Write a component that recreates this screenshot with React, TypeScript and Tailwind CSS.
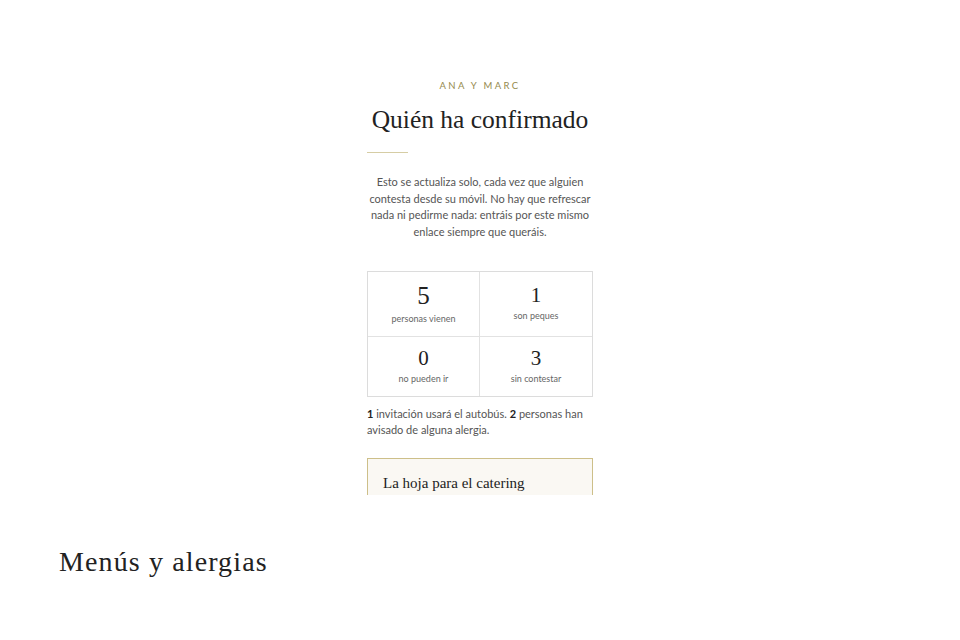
import React from 'react';

const serif = { fontFamily: '"Liberation Serif", "DejaVu Serif", serif' };

const stats = [
  { n: '5', label: 'personas vienen', big: true },
  { n: '1', label: 'son peques' },
  { n: '0', label: 'no pueden ir' },
  { n: '3', label: 'sin contestar' },
];

function StatCell({ n, label, big, i }: { n: string; label: string; big?: boolean; i: number }) {
  return (
    <div
      className={
        'flex flex-col items-center justify-center py-[10px] ' +
        (i % 2 === 0 ? 'border-r border-[#e2e2e2] ' : '') +
        (i < 2 ? 'border-b border-[#e2e2e2]' : '')
      }
    >
      <span
        className={big ? 'text-[25px] leading-[28px] text-[#222]' : 'text-[21px] leading-[23px] text-[#222]'}
        style={serif}
      >
        {n}
      </span>
      <span className="mt-[2px] text-[9px] leading-[14px] text-[#666]">{label}</span>
    </div>
  );
}

export default function App() {
  return (
    <div className="min-h-screen bg-white" style={{ fontFamily: 'Lato, "Noto Sans", sans-serif' }}>
      <div className="h-[495px] overflow-hidden">
        <div className="mx-auto flex w-[226px] flex-col items-center pt-[80px]">
          <p className="text-[9.5px] leading-[12px] tracking-[0.25em] text-[#958a4e]">ANA Y MARC</p>
          <h1 className="mt-[12px] whitespace-nowrap text-[25.5px] leading-[32px] text-[#222]" style={serif}>
            Quién ha confirmado
          </h1>
          <div className="mt-[16px] h-px w-[41px] self-start bg-[#d6cda4]" />
          <p className="mt-[21px] text-center text-[11px] leading-[16.7px] text-[#555]">
            Esto se actualiza solo, cada vez que alguien contesta desde su móvil. No hay que refrescar nada ni
            pedirme nada: entráis por este mismo enlace siempre que queráis.
          </p>
          <div className="mt-[30px] grid w-full grid-cols-2 border border-[#dcdcdc]">
            {stats.map((s, i) => (
              <StatCell key={i} i={i} {...s} />
            ))}
          </div>
          <p className="mt-[9px] w-full text-[11px] leading-[16.3px] text-[#555]">
            <b className="text-[#222]">1</b> invitación usará el autobús. <b className="text-[#222]">2</b> personas
            han avisado de alguna alergia.
          </p>
          <div className="mt-[20px] w-full border border-[#cdbf89] bg-[#faf8f3] px-[15px] pt-[14px] pb-[40px]">
            <h3 className="text-[15px] leading-[20px] text-[#222]" style={serif}>
              La hoja para el catering
            </h3>
          </div>
        </div>
      </div>
      <div className="px-[59px] pt-[46px]">
        <h2 className="text-[28px] tracking-[0.04em] text-[#222]" style={serif}>
          Menús y alergias
        </h2>
      </div>
    </div>
  );
}
